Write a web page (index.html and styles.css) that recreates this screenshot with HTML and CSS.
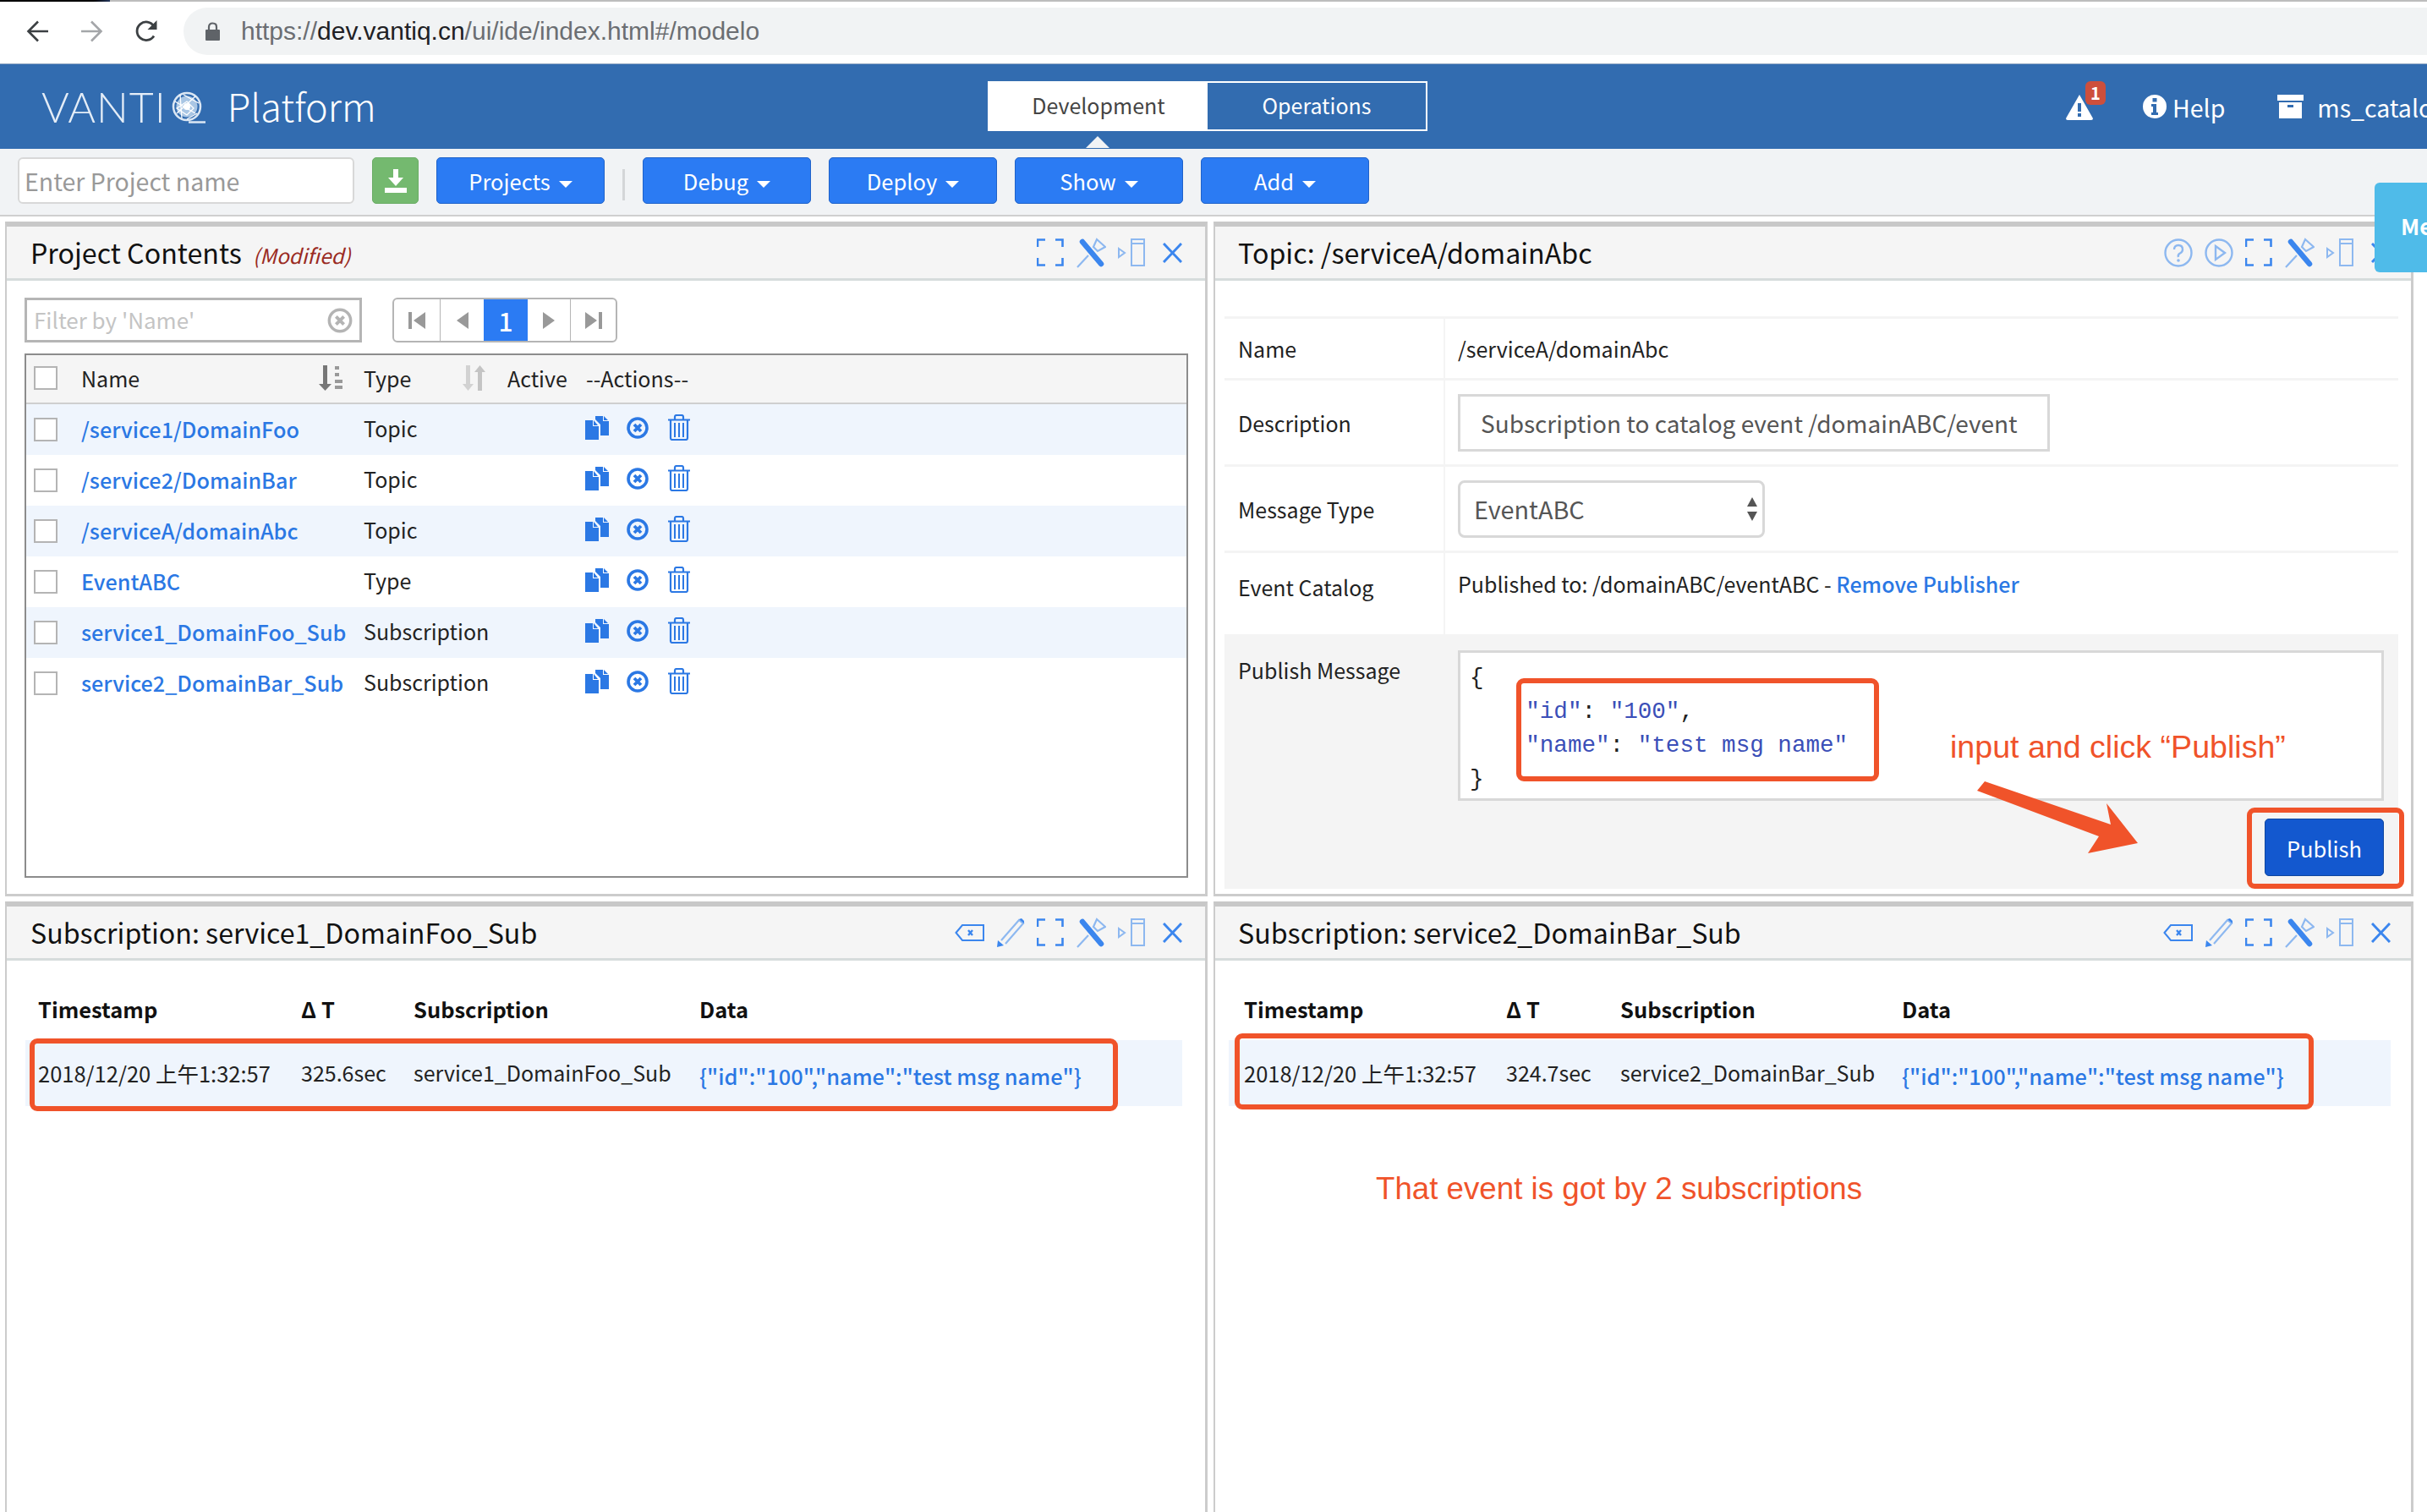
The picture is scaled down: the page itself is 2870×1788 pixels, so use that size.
FILE: index.html
```html
<!DOCTYPE html>
<html lang="en">
<head>
<meta charset="utf-8">
<title>VANTIQ Platform</title>
<link rel="stylesheet" href="styles.css">
</head>
<body>
<svg class="sprite" aria-hidden="true">
  <symbol id="i-copy" viewBox="0 0 28 28"><path fill="currentColor" d="M12 0h9v6h7v17H18V10l-6-6zM22 0l5 5h-5zM0 5h9v7h7v16H0zM10 5l5 6h-5z"/></symbol>
  <symbol id="i-cancel" viewBox="0 0 26 26"><circle cx="13" cy="13" r="11" fill="none" stroke="currentColor" stroke-width="3.6"/><path d="M9 9l8 8M17 9l-8 8" fill="none" stroke="currentColor" stroke-width="3.8"/></symbol>
  <symbol id="i-trash" viewBox="0 0 26 31"><path fill="none" stroke="currentColor" stroke-width="2.200" d="M8 6V3q0-2 2-2h6q2 0 2 2v3M0 6.500h26M3 7v21q0 2 2 2h16q2 0 2-2V7"/><path fill="none" stroke="currentColor" stroke-width="2" d="M8 10v17M13 10v17M18 10v17"/></symbol>
  <symbol id="i-full" viewBox="0 0 32 33"><path fill="none" stroke="currentColor" stroke-width="2.600" d="M1 10V1.500h9M22 1.500h8.500V10M30.500 23v8.500H22M10 31.500H1V23"/></symbol>
  <symbol id="i-pin" viewBox="0 0 36 36"><path fill="none" stroke="#8db8f0" stroke-width="2.200" d="M21 11l4-9 10 9-9 5zM15 21L2 35"/><path fill="none" stroke="currentColor" stroke-width="6.500" stroke-linecap="round" d="M8 5l22 26"/></symbol>
  <symbol id="i-dock" viewBox="0 0 32 33"><path fill="none" stroke="#8db8f0" stroke-width="2" d="M1 12l7 5-7 5zM16 1h15v31H16zM16 6h15"/></symbol>
  <symbol id="i-x" viewBox="0 0 23 24"><path fill="none" stroke="currentColor" stroke-width="3" d="M1 1l21 22M22 1L1 23"/></symbol>
  <symbol id="i-help" viewBox="0 0 34 34"><circle cx="17" cy="17" r="15.500" fill="none" stroke="#8db8f0" stroke-width="2.400"/><path fill="none" stroke="#8db8f0" stroke-width="2.400" d="M12 13q0-5 5-5t5 5q0 3-3 4.500T17 22"/><circle cx="17" cy="26" r="1.800" fill="#8db8f0"/></symbol>
  <symbol id="i-play" viewBox="0 0 34 34"><circle cx="17" cy="17" r="15.500" fill="none" stroke="#8db8f0" stroke-width="2.400"/><path fill="none" stroke="#8db8f0" stroke-width="2.400" d="M13 9l11 8-11 8z"/></symbol>
  <symbol id="i-back" viewBox="0 0 35 20"><path fill="none" stroke="currentColor" stroke-width="2" d="M1.500 10L9 1h25v18H9z"/><path fill="none" stroke="currentColor" stroke-width="2.400" d="M16 7l5 6M21 7l-5 6"/></symbol>
  <symbol id="i-pencil" viewBox="0 0 34 36"><path fill="none" stroke="#8db8f0" stroke-width="2.200" d="M6 27L27 3l5 4-21 24"/><path fill="currentColor" d="M1 35l1-8 7 6z"/><path fill="currentColor" d="M27 2l3-1 3 3v3z"/></symbol>
</svg>

<div class="page">
  <div class="topstrip"><span class="topstrip-dark"></span></div>

  <div class="chrome">
    <svg class="chrome-icon" viewBox="0 0 27 26"><path fill="none" stroke="#3c4043" stroke-width="2.600" d="M26 13H3M14 1.500L2.500 13 14 24.500"/></svg>
    <svg class="chrome-icon chrome-forward" viewBox="0 0 27 26"><path fill="none" stroke="#a4a6a9" stroke-width="2.600" d="M1 13h23M13 1.500L24.500 13 13 24.500"/></svg>
    <svg class="chrome-icon chrome-reload" viewBox="0 0 27 26"><path fill="none" stroke="#3c4043" stroke-width="2.800" d="M22 18.500A10.800 10.800 0 1 1 22 7"/><path fill="#3c4043" d="M25.500 0v11h-11z"/></svg>
    <div class="urlbar">
      <svg class="lock" viewBox="0 0 17 22"><path fill="#5f6368" d="M1 9h15q1 0 1 1v11q0 1-1 1H1q-1 0-1-1V10q0-1 1-1z"/><path fill="none" stroke="#5f6368" stroke-width="2.200" d="M4 9V6q0-4.500 4.500-4.500T13 6v3"/></svg>
      <span class="url"><span class="url-dim">https://</span>dev.vantiq.cn<span class="url-dim">/ui/ide/index.html#/modelo</span></span>
    </div>
  </div>

  <header class="nav">
    <div class="brand">
      <span class="logo-text">VANTI</span>
      <svg class="logo-q" viewBox="0 0 40 38"><circle cx="18" cy="18" r="16" fill="none" stroke="#dbe7f4" stroke-width="2.500"/><circle cx="18" cy="18" r="12.500" fill="#a9c6e4"/><path fill="none" stroke="#fff" stroke-width="1.300" d="M4 12l24 14M10 4l2 28M28 6L6 26M32 14L14 4M30 26L18 33M6 20l12-8 8 8-8 8z"/><circle cx="18" cy="18" r="4" fill="#fff"/><path stroke="#dbe7f4" stroke-width="2.500" d="M20 36.500h20"/></svg>
      <span class="brand-name">Platform</span>
    </div>
    <div class="tabs">
      <span class="tab tab-active"><span class="tab-label">Development</span></span>
      <span class="tab"><span class="tab-label">Operations</span></span>
    </div>
    <div class="nav-right">
      <span class="alert">
        <svg class="alert-icon" viewBox="0 0 32 30"><path fill="#fff" fill-rule="evenodd" d="M16 0l16 28q0 2-2 2H2q-2 0-2-2zM14 10v10h4V10zM14 22v4h4v-4z"/></svg>
        <span class="badge">1</span>
      </span>
      <span class="help">
        <svg class="info-icon" viewBox="0 0 28 28"><path fill="#fff" fill-rule="evenodd" d="M14 0a14 14 0 1 1 0 28a14 14 0 1 1 0-28zM11.500 4v4.500h5V4zM10 11v3h2v7h-2v3h8v-3h-2V11z"/></svg>
        <span>Help</span>
      </span>
      <span class="user">
        <svg class="box-icon" viewBox="0 0 31 28"><path fill="#fff" fill-rule="evenodd" d="M0 0h31v7H0zM2 9h27v19H2zM12 12v3h7v-3z"/></svg>
        <span>ms_catalog</span>
      </span>
    </div>
  </header>

  <div class="toolbar">
    <input class="project-input" placeholder="Enter Project name">
    <button class="btn-green" aria-label="Download">
      <svg class="dl-icon" viewBox="0 0 26 28"><path fill="#fff" d="M10 0h6v10h6l-9 10-9-10h6zM0 22h26v6H0z"/></svg>
    </button>
    <button class="btn">Projects<span class="caret"></span></button>
    <span class="tool-sep"></span>
    <button class="btn">Debug<span class="caret"></span></button>
    <button class="btn">Deploy<span class="caret"></span></button>
    <button class="btn">Show<span class="caret"></span></button>
    <button class="btn">Add<span class="caret"></span></button>
  </div>

  <main class="panels">
    <section class="panel">
      <div class="panel-head">
        <h2 class="panel-title">Project Contents <em class="modified">(Modified)</em></h2>
        <div class="panel-tools">
          <svg class="t-full"><use href="#i-full"/></svg>
          <svg class="t-pin"><use href="#i-pin"/></svg>
          <svg class="t-dock"><use href="#i-dock"/></svg>
          <svg class="t-x"><use href="#i-x"/></svg>
        </div>
      </div>
      <div class="project-body">
        <div class="filter-row">
          <div class="filter">
            <input class="filter-input" placeholder="Filter by 'Name'">
            <svg class="filter-clear" viewBox="0 0 26 26"><circle cx="13" cy="13" r="11" fill="none" stroke="#b4b4b4" stroke-width="3"/><path d="M9 9l8 8M17 9l-8 8" fill="none" stroke="#b4b4b4" stroke-width="3.400"/></svg>
          </div>
          <div class="pager">
            <span class="page-cell page-first"><svg viewBox="0 0 22 20"><path fill="#999" d="M1 0h4v20H1zM21 0v20L7 10z"/></svg></span>
            <span class="page-cell page-prev"><svg viewBox="0 0 22 20"><path fill="#999" d="M18 0v20L4 10z"/></svg></span>
            <span class="page-cell page-on">1</span>
            <span class="page-cell page-next"><svg viewBox="0 0 22 20"><path fill="#999" d="M4 0v20l14-10z"/></svg></span>
            <span class="page-cell page-last"><svg viewBox="0 0 22 20"><path fill="#999" d="M1 0v20l14-10zM17 0h4v20h-4z"/></svg></span>
          </div>
        </div>
        <div class="grid-box">
          <div class="grid-head">
            <span class="check"></span>
            <span class="cell-sort">Name<svg class="sort" viewBox="0 0 29 30"><path fill="#777" d="M6 0h5v22h5l-7.500 8L1 22h5z"/><path fill="#999" d="M20 1h5v4h-5zM20 9h5v4h-5zM20 17h9v4h-9zM20 24h9v4h-9z"/></svg></span>
            <span class="cell-sort">Type<svg class="sort sort-light" viewBox="0 0 27 30"><path fill="#d2d2d2" d="M4 0h5v22h4l-6.500 8L0 22h4z"/><path fill="#c4c4c4" d="M18 30h5V8h4L20.500 0 14 8h4z"/></svg></span>
            <span>Active</span>
            <span>--Actions--</span>
          </div>
          <div class="grid-row row-alt">
            <span class="check"></span><a class="link name-link">/service1/DomainFoo</a><span class="cell-type">Topic</span><span></span>
            <span class="actions"><svg class="a-copy"><use href="#i-copy"/></svg><svg class="a-cancel"><use href="#i-cancel"/></svg><svg class="a-trash"><use href="#i-trash"/></svg></span>
          </div>
          <div class="grid-row">
            <span class="check"></span><a class="link name-link">/service2/DomainBar</a><span class="cell-type">Topic</span><span></span>
            <span class="actions"><svg class="a-copy"><use href="#i-copy"/></svg><svg class="a-cancel"><use href="#i-cancel"/></svg><svg class="a-trash"><use href="#i-trash"/></svg></span>
          </div>
          <div class="grid-row row-alt">
            <span class="check"></span><a class="link name-link">/serviceA/domainAbc</a><span class="cell-type">Topic</span><span></span>
            <span class="actions"><svg class="a-copy"><use href="#i-copy"/></svg><svg class="a-cancel"><use href="#i-cancel"/></svg><svg class="a-trash"><use href="#i-trash"/></svg></span>
          </div>
          <div class="grid-row">
            <span class="check"></span><a class="link name-link">EventABC</a><span class="cell-type">Type</span><span></span>
            <span class="actions"><svg class="a-copy"><use href="#i-copy"/></svg><svg class="a-cancel"><use href="#i-cancel"/></svg><svg class="a-trash"><use href="#i-trash"/></svg></span>
          </div>
          <div class="grid-row row-alt">
            <span class="check"></span><a class="link name-link">service1_DomainFoo_Sub</a><span class="cell-type">Subscription</span><span></span>
            <span class="actions"><svg class="a-copy"><use href="#i-copy"/></svg><svg class="a-cancel"><use href="#i-cancel"/></svg><svg class="a-trash"><use href="#i-trash"/></svg></span>
          </div>
          <div class="grid-row">
            <span class="check"></span><a class="link name-link">service2_DomainBar_Sub</a><span class="cell-type">Subscription</span><span></span>
            <span class="actions"><svg class="a-copy"><use href="#i-copy"/></svg><svg class="a-cancel"><use href="#i-cancel"/></svg><svg class="a-trash"><use href="#i-trash"/></svg></span>
          </div>
        </div>
      </div>
    </section>

    <section class="panel">
      <div class="panel-head panel-head-right">
        <h2 class="panel-title">Topic: /serviceA/domainAbc</h2>
        <div class="panel-tools">
          <svg class="t-circle"><use href="#i-help"/></svg>
          <svg class="t-circle"><use href="#i-play"/></svg>
          <svg class="t-full"><use href="#i-full"/></svg>
          <svg class="t-pin"><use href="#i-pin"/></svg>
          <svg class="t-dock"><use href="#i-dock"/></svg>
          <svg class="t-x"><use href="#i-x"/></svg>
        </div>
      </div>
      <div class="form">
        <div class="form-row row-name"><span class="form-label">Name</span><span class="form-value">/serviceA/domainAbc</span></div>
        <div class="form-row row-desc"><span class="form-label">Description</span><span class="form-value"><input class="desc-input" value="Subscription to catalog event /domainABC/event"></span></div>
        <div class="form-row row-type"><span class="form-label">Message Type</span><span class="form-value"><span class="select">EventABC<svg class="select-arrows" viewBox="0 0 14 28"><path fill="#555" d="M7 0l6 11H1zM7 28L1 17h12z"/></svg></span></span></div>
        <div class="form-row row-catalog"><span class="form-label label-catalog">Event Catalog</span><span class="form-value value-catalog">Published to: /domainABC/eventABC - <a class="link link-strong">Remove Publisher</a></span></div>
        <div class="form-row row-publish">
          <span class="form-label label-publish">Publish Message</span>
          <div class="form-value value-publish">
            <pre class="json">{
    <span class="json-key">"id"</span>: <span class="json-key">"100"</span>,
    <span class="json-key">"name"</span>: <span class="json-key">"test msg name"</span>
}</pre>
            <button class="publish">Publish</button>
          </div>
        </div>
      </div>
    </section>

    <section class="panel panel-open">
      <div class="panel-head">
        <h2 class="panel-title">Subscription: service1_DomainFoo_Sub</h2>
        <div class="panel-tools">
          <svg class="t-back"><use href="#i-back"/></svg>
          <svg class="t-pencil"><use href="#i-pencil"/></svg>
          <svg class="t-full"><use href="#i-full"/></svg>
          <svg class="t-pin"><use href="#i-pin"/></svg>
          <svg class="t-dock"><use href="#i-dock"/></svg>
          <svg class="t-x"><use href="#i-x"/></svg>
        </div>
      </div>
      <div class="events events-left">
        <div class="ev-head"><span>Timestamp</span><span>Δ T</span><span>Subscription</span><span>Data</span></div>
        <div class="ev-row"><span class="ev-time">2018/12/20 上午1:32:57</span><span>325.6sec</span><span>service1_DomainFoo_Sub</span><a class="link ev-data">{"id":"100","name":"test msg name"}</a></div>
      </div>
    </section>

    <section class="panel panel-open">
      <div class="panel-head panel-head-right">
        <h2 class="panel-title">Subscription: service2_DomainBar_Sub</h2>
        <div class="panel-tools">
          <svg class="t-back"><use href="#i-back"/></svg>
          <svg class="t-pencil"><use href="#i-pencil"/></svg>
          <svg class="t-full"><use href="#i-full"/></svg>
          <svg class="t-pin"><use href="#i-pin"/></svg>
          <svg class="t-dock"><use href="#i-dock"/></svg>
          <svg class="t-x"><use href="#i-x"/></svg>
        </div>
      </div>
      <div class="events events-right">
        <div class="ev-head"><span>Timestamp</span><span>Δ T</span><span>Subscription</span><span>Data</span></div>
        <div class="ev-row"><span class="ev-time">2018/12/20 上午1:32:57</span><span>324.7sec</span><span>service2_DomainBar_Sub</span><a class="link ev-data">{"id":"100","name":"test msg name"}</a></div>
      </div>
    </section>
  </main>

  <div class="me-tab"><span>Me</span></div>

  <div class="mark mark-json"></div>
  <div class="mark mark-publish"></div>
  <div class="mark mark-left"></div>
  <div class="mark mark-right"></div>
  <div class="note note-input">input and click “Publish”</div>
  <div class="note note-event">That event is got by 2 subscriptions</div>
  <svg class="note-arrow" viewBox="0 0 200 90"><path fill="#f0532a" d="M0 11L9 0 158 51 153 26 190 73 131 85 144 65z"/></svg>
</div>
</body>
</html>
```

FILE: styles.css
```css
* { box-sizing: border-box; }
html, body { margin: 0; padding: 0; background: #fff; }
body {
  font-family: "Noto Sans CJK SC", "Noto Sans", sans-serif;
  color: #222;
  font-size: 25px;
  overflow: hidden;
}
.sprite { display: none; }
.page { position: relative; width: 2870px; height: 1788px; overflow: hidden; }

/* browser chrome */
.topstrip { height: 2px; background: #bdbdbd; }
.topstrip-dark { display: block; width: 130px; height: 2px; background: linear-gradient(90deg, #000 85%, #24365c); }
.chrome { height: 73px; display: flex; align-items: center; padding: 0 0 3px 31px; background: #fff; }
.chrome-icon { width: 27px; height: 26px; flex: none; }
.chrome-forward { margin-left: 37px; }
.chrome-reload { margin-left: 38px; }
.urlbar {
  flex: 1;
  height: 56px;
  margin-left: 30px;
  background: #f1f3f4;
  border-radius: 28px 0 0 28px;
  display: flex;
  align-items: center;
  padding-left: 26px;
}
.lock { width: 17px; height: 22px; }
.url { margin-left: 25px; font: 30px "Liberation Sans", sans-serif; color: #202124; }
.url-dim { color: #6b6e72; }

/* nav */
.nav {
  height: 101px;
  background: #326cb0;
  border-top: 1px solid #8fa6c2;
  display: flex;
  align-items: center;
  color: #fff;
  position: relative;
}
.brand { flex: none; width: 1168px; display: flex; align-items: center; padding-left: 49px; }
.logo-text { font: 300 50px/1 "Lato", sans-serif; color: #e4edf7; letter-spacing: 1px; }
.logo-q { width: 40px; height: 38px; margin-left: 6px; margin-top: 2px; }
.brand-name { font-size: 45px; line-height: 1; margin-left: 26px; margin-top: -3px; font-weight: 300; }
.tabs { flex: none; display: flex; height: 59px; width: 520px; margin-top: -2px; border: 2px solid #fff; }
.tab { flex: 1; display: flex; align-items: center; justify-content: center; font-size: 25px; color: #fff; }
.tab-label { margin-top: -2px; }
.tab-active { background: #fff; color: #444; position: relative; }
.tab-active::after {
  content: "";
  position: absolute;
  left: 114px;
  top: 63px;
  border: 14px solid transparent;
  border-top: 0;
  border-bottom: 14px solid #f1f3f5;
}
.nav-right { flex: 1; display: flex; align-items: center; padding-left: 755px; white-space: nowrap; font-size: 28.500px; }
.alert { position: relative; display: block; width: 32px; height: 30px; margin-top: 2px; }
.alert-icon { display: block; width: 32px; height: 30px; }
.badge {
  position: absolute;
  left: 23px;
  top: -16px;
  width: 24px;
  height: 28px;
  background: #cd4f3c;
  border-radius: 6px;
  font-size: 20px;
  font-weight: 700;
  text-align: center;
  line-height: 28px;
}
.help { display: flex; align-items: center; margin-left: 59px; }
.info-icon { width: 28px; height: 28px; margin-right: 7px; }
.user { display: flex; align-items: center; margin-left: 62px; }
.box-icon { width: 31px; height: 28px; margin-right: 16px; }

/* toolbar */
.toolbar {
  height: 80px;
  background: #f1f3f5;
  border-bottom: 2px solid #cfcfcf;
  display: flex;
  align-items: flex-start;
  padding: 10px 0 0 21px;
}
.project-input {
  width: 398px;
  height: 55px;
  border: 2px solid #d8d8d8;
  border-radius: 6px;
  padding: 0 6px;
  font: 28.500px "Noto Sans CJK SC", sans-serif;
  background: #fff;
}
.project-input::placeholder { color: #999; opacity: 1; }
.btn-green {
  width: 55px;
  height: 55px;
  margin-left: 21px;
  background: #74b96f;
  border: 1px solid #6aad65;
  border-radius: 5px;
  padding: 0;
  display: flex;
  align-items: center;
  justify-content: center;
}
.dl-icon { width: 26px; height: 28px; }
.btn {
  width: 199px;
  height: 55px;
  margin-left: 21px;
  background: #2b7bf3;
  border: 1px solid #1f62c9;
  border-radius: 5px;
  color: #fff;
  font: 25.500px "Noto Sans CJK SC", sans-serif;
  padding: 0;
}
.caret {
  display: inline-block;
  margin-left: 10px;
  vertical-align: middle;
  border-left: 8px solid transparent;
  border-right: 8px solid transparent;
  border-top: 8px solid #fff;
}
.tool-sep { width: 3px; height: 37px; background: #d4d6d8; margin: 14px 0 0 21px; }
.tool-sep + .btn { margin-left: 21px; }

/* panels */
.panels {
  display: grid;
  grid-template-columns: 1422px 1419px;
  grid-template-rows: 798px 740px;
  column-gap: 7px;
  row-gap: 6px;
  padding: 6px 0 0 6px;
}
.panel {
  border-top: 6px solid #c8c8c8;
  border-left: 2px solid #ccc;
  border-right: 3px solid #ccc;
  border-bottom: 3px solid #ccc;
  background: #fff;
}
.panel-open { border-bottom: 0; }
.panel-head {
  height: 64px;
  background: #f5f5f5;
  border-bottom: 3px solid #d6dcdc;
  display: flex;
  align-items: center;
  justify-content: space-between;
  padding: 0 27px 0 28px;
}
.panel-head-right { padding-left: 27px; padding-right: 24px; }
.panel-title { margin: 0; font-size: 32.200px; font-weight: 400; color: #111; line-height: 1; }
.modified { font-size: 24.300px; color: #9a2a22; margin-left: 6px; font-style: italic; }
.panel-tools { display: flex; align-items: center; gap: 14px; color: #3b86ee; }
.t-full { width: 32px; height: 33px; }
.t-pin { width: 36px; height: 36px; }
.t-dock { width: 32px; height: 33px; }
.t-x { width: 23px; height: 24px; margin-left: 7px; }
.t-circle { width: 34px; height: 34px; }
.t-back { width: 35px; height: 20px; }
.t-pencil { width: 34px; height: 36px; }

/* project contents */
.project-body { padding: 20px 20px 0 21px; }
.filter-row { display: flex; align-items: flex-start; }
.filter {
  width: 399px;
  height: 53px;
  border: 3px solid #b5b5b5;
  display: flex;
  align-items: center;
  padding-right: 8px;
}
.filter-input {
  flex: 1;
  min-width: 0;
  border: 0;
  outline: 0;
  font: 26px "Noto Sans CJK SC", sans-serif;
  padding: 0 8px 2px;
  background: transparent;
}
.filter-input::placeholder { color: #c4c4c4; opacity: 1; }
.filter-clear { width: 30px; height: 30px; }
.pager {
  display: flex;
  height: 53px;
  margin-left: 36px;
  border: 2px solid #b5b5b5;
  border-radius: 6px;
  overflow: hidden;
}
.page-cell { display: flex; align-items: center; justify-content: center; }
.page-cell svg { width: 22px; height: 20px; }
.page-first { width: 55px; border-right: 1px solid #b5b5b5; }
.page-prev { width: 51px; }
.page-on { width: 52px; background: #2b7bf3; color: #fff; font-size: 30px; font-weight: 500; }
.page-next { width: 51px; border-right: 1px solid #b5b5b5; }
.page-last { width: 53px; }

.grid-box {
  margin-top: 13px;
  height: 620px;
  border: 2px solid #8c8c8c;
}
.grid-head, .grid-row {
  display: grid;
  grid-template-columns: 65px 334px 170px 93px 1fr;
  align-items: center;
  white-space: nowrap;
}
.grid-head {
  height: 58px;
  background: #f5f5f5;
  border-bottom: 2px solid #cfcfcf;
  font-size: 25px;
  color: #222;
  padding-bottom: 2px;
}
.grid-row { height: 60px; font-size: 25px; color: #222; }
.row-alt { background: #eff5fd; }
.check {
  display: block;
  width: 28px;
  height: 28px;
  margin-left: 9px;
  border: 2px solid #b4b4b4;
  background: #fff;
}
.cell-sort { display: flex; align-items: center; justify-content: space-between; padding-right: 25px; }
.sort { width: 29px; height: 30px; }
.sort-light { width: 27px; margin-right: 1px; }
.link { color: #2b78e4; }
.name-link { font-size: 25.200px; font-weight: 500; position: relative; top: -1px; }
.cell-type { position: relative; top: -2px; }
.actions { display: flex; align-items: center; color: #2b78e4; margin-top: -4px; margin-left: -1px; }
.a-copy { width: 28px; height: 28px; }
.a-cancel { width: 26px; height: 26px; margin-left: 21px; }
.a-trash { width: 26px; height: 31px; margin-left: 23px; margin-top: -2px; }

/* topic form */
.form { margin: 42px 15px 0 11px; border-top: 3px solid #f4f4f4; }
.form-row { display: grid; grid-template-columns: 261px 1fr; align-items: center; border-bottom: 3px solid #f4f4f4; font-size: 25px; }
.form-label { padding-left: 16px; align-self: stretch; display: flex; align-items: center; border-right: 2px solid #f4f4f4; height: 100%; color: #222; }
.form-value { padding-left: 15px; color: #222; }
.row-name { height: 73px; }
.row-desc { height: 102px; }
.row-type { height: 102px; }
.row-catalog { height: 96px; align-items: start; border-bottom: 0; }
.label-catalog { align-items: flex-start; padding-top: 22px; }
.value-catalog { padding-top: 18px; }
.link-strong { font-weight: 500; }
.desc-input {
  display: block;
  width: 700px;
  height: 68px;
  border: 3px solid #d8d8d8;
  padding: 0 24px;
  font: 28px "Noto Sans CJK SC", sans-serif;
  color: #555;
}
.select {
  display: flex;
  align-items: center;
  justify-content: space-between;
  width: 363px;
  height: 68px;
  border: 3px solid #d8d8d8;
  border-radius: 8px;
  padding: 0 5px 0 16px;
  font-size: 28.800px;
  color: #555;
}
.select-arrows { width: 14px; height: 28px; }
.row-publish { height: 301px; align-items: start; background: #f4f4f4; border-bottom: 0; }
.label-publish { align-items: flex-start; padding-top: 24px; }
.value-publish { padding-top: 19px; padding-right: 17px; display: flex; flex-direction: column; align-items: flex-end; }
.json {
  width: 100%;
  height: 178px;
  margin: 0;
  padding: 10px 0 0 11px;
  background: #fff;
  border: 3px solid #d8d8d8;
  font: 27.600px/40px "Liberation Mono", monospace;
  color: #222;
}
.json-key { color: #3b4fb8; }
.publish {
  margin-top: 21px;
  width: 141px;
  height: 68px;
  background: #1358cf;
  border: 1px solid #0e469f;
  border-radius: 5px;
  color: #fff;
  font: 25.500px "Noto Sans CJK SC", sans-serif;
  padding: 0;
}

/* event tables */
.events { margin: 30px 27px 0 22px; }
.ev-head, .ev-row { display: grid; white-space: nowrap; align-items: center; }
.events-left .ev-head, .events-left .ev-row { grid-template-columns: 311px 133px 338px 1fr; padding-left: 15px; }
.events-right .ev-head, .events-right .ev-row { grid-template-columns: 310px 135px 333px 1fr; padding-left: 18px; }
.events-right { margin-left: 16px; margin-right: 24px; }
.ev-head { height: 64px; font-size: 25.500px; font-weight: 700; color: #111; padding-bottom: 12px; }
.ev-row { height: 78px; background: #eff5fd; font-size: 25px; color: #222; }
.ev-row span { position: relative; top: -1px; }
.ev-row .ev-time { font-size: 25.500px; }
.ev-data { font-size: 25.400px; font-weight: 500; position: relative; top: 3px; }

/* overlays */
.me-tab {
  position: absolute;
  left: 2808px;
  top: 216px;
  width: 80px;
  height: 106px;
  background: #4fbbe9;
  border-radius: 6px;
  color: #fff;
  font-size: 26px;
  font-weight: 700;
  display: flex;
  align-items: center;
  padding: 0 0 6px 31px;
}
.mark { position: absolute; border: 6px solid #f0532a; border-radius: 9px; }
.mark-json { left: 1793px; top: 802px; width: 429px; height: 122px; }
.mark-publish { left: 2657px; top: 955px; width: 186px; height: 96px; }
.mark-left { left: 35px; top: 1228px; width: 1287px; height: 86px; }
.mark-right { left: 1460px; top: 1222px; width: 1276px; height: 90px; }
.note { position: absolute; font-family: "Liberation Sans", sans-serif; line-height: 1; color: #f0532a; white-space: nowrap; }
.note-input { left: 2306px; top: 865px; font-size: 37.600px; }
.note-event { left: 1627px; top: 1388px; font-size: 36.700px; }
.note-arrow { position: absolute; left: 2338px; top: 924px; width: 200px; height: 90px; }
```
